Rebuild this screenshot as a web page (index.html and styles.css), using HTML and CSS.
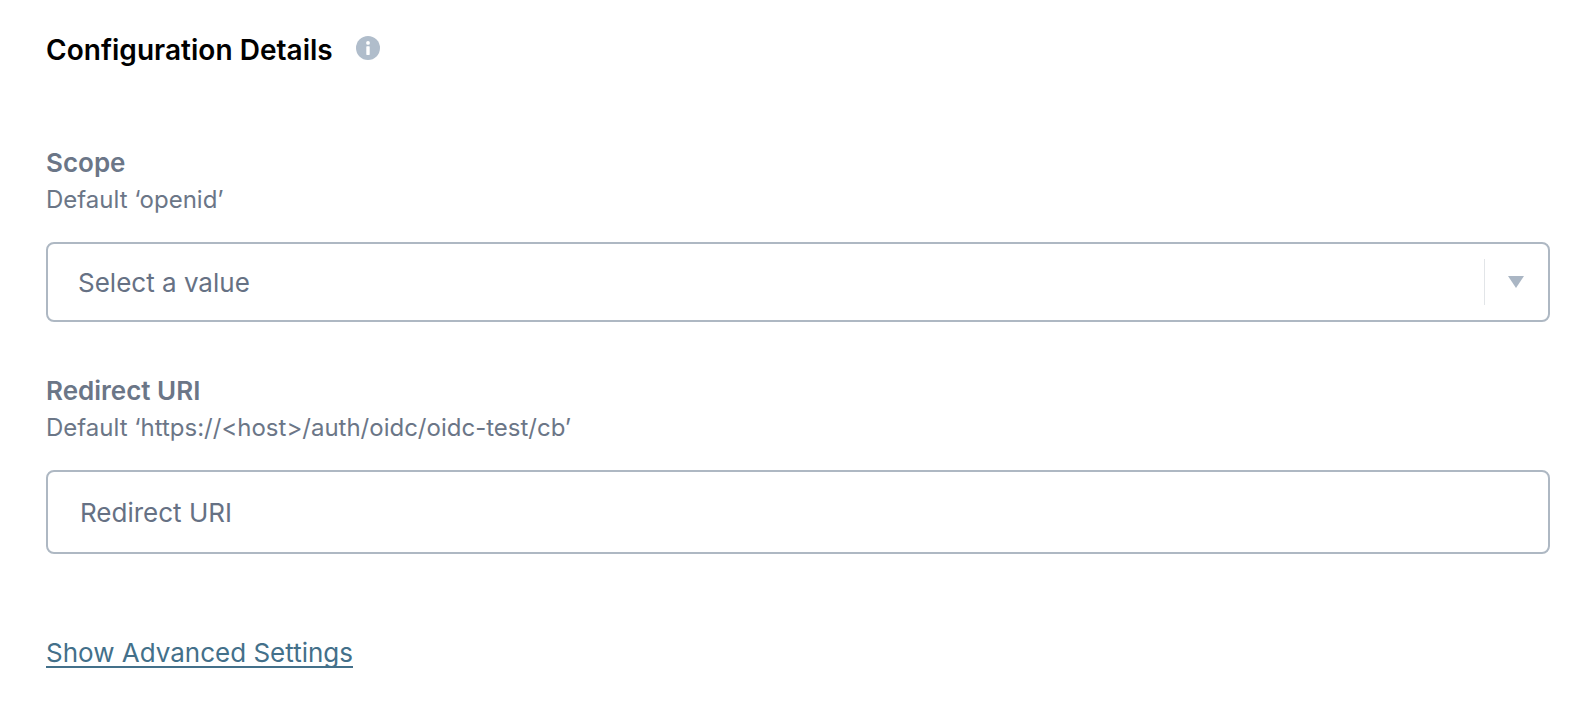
FILE: index.html
```html
<!DOCTYPE html>
<html lang="en">
<head>
<meta charset="utf-8">
<title>Configuration Details</title>
<link rel="stylesheet" href="styles.css">
</head>
<body>
<main class="page">
  <header class="heading">
    <h2 class="title">Configuration Details</h2>
    <svg class="info" width="24" height="24" viewBox="0 0 24 24" aria-hidden="true">
      <circle cx="12" cy="12" r="12" fill="#b0bdcb"/>
      <circle cx="12" cy="6.9" r="1.9" fill="#fff"/>
      <rect x="10.3" y="10.3" width="3.4" height="8.6" rx="0.6" fill="#fff"/>
    </svg>
  </header>
  <section class="field field-scope">
    <div class="label">Scope</div>
    <div class="hint">Default ‘openid’</div>
    <div class="control select">
      <span class="value">Select a value</span>
      <span class="sep"></span>
      <span class="arrow"></span>
    </div>
  </section>
  <section class="field field-redirect">
    <div class="label">Redirect URI</div>
    <div class="hint">Default ‘https://&lt;host&gt;/auth/oidc/oidc-test/cb’</div>
    <div class="control input">
      <span class="value">Redirect URI</span>
    </div>
  </section>
  <a class="advanced" href="#">Show Advanced Settings</a>
</main>
</body>
</html>
```
FILE: styles.css
```css
* { box-sizing: border-box; }
html, body { margin: 0; padding: 0; background: #fff; }
body { font-family: Inter, "Liberation Sans", sans-serif; height: 712px; overflow: hidden; }
.page { display: flex; flex-direction: column; padding: 33px 44px 0 46px; }
.heading { display: flex; align-items: center; gap: 23px; height: 34px; }
.title { margin: 0; font-size: 28px; font-weight: 600; line-height: 34px; color: #000; letter-spacing: 0.03px; }
.info { display: block; margin-top: -4px; }
.field { display: flex; flex-direction: column; }
.field-scope { margin-top: 79px; }
.field-redirect { margin-top: 52px; }
.label { font-size: 26px; font-weight: 600; line-height: 34px; color: #6b7687; }
.hint { font-size: 24px; line-height: 28px; color: #6b7687; margin-top: 6px; }
.control { display: flex; align-items: center; border: 2px solid #aeb8c3; border-radius: 8px; background: #fff; font-size: 26px; color: #667184; margin-top: 28px; }
.select { height: 80px; padding-left: 30px; }
.input { height: 84px; padding-left: 32px; }
.value { flex: 1; }
.sep { width: 1.5px; height: 46px; background: #e2e5e8; }
.arrow { width: 0; height: 0; margin: 0 24px 0 23px; border-left: 8px solid transparent; border-right: 8px solid transparent; border-top: 12px solid #aab6c4; }
.advanced { align-self: flex-start; margin-top: 81px; font-size: 26px; line-height: 36px; color: #43708a; text-decoration: underline; text-decoration-thickness: 2px; text-decoration-skip-ink: none; text-underline-offset: 4px; }
```
